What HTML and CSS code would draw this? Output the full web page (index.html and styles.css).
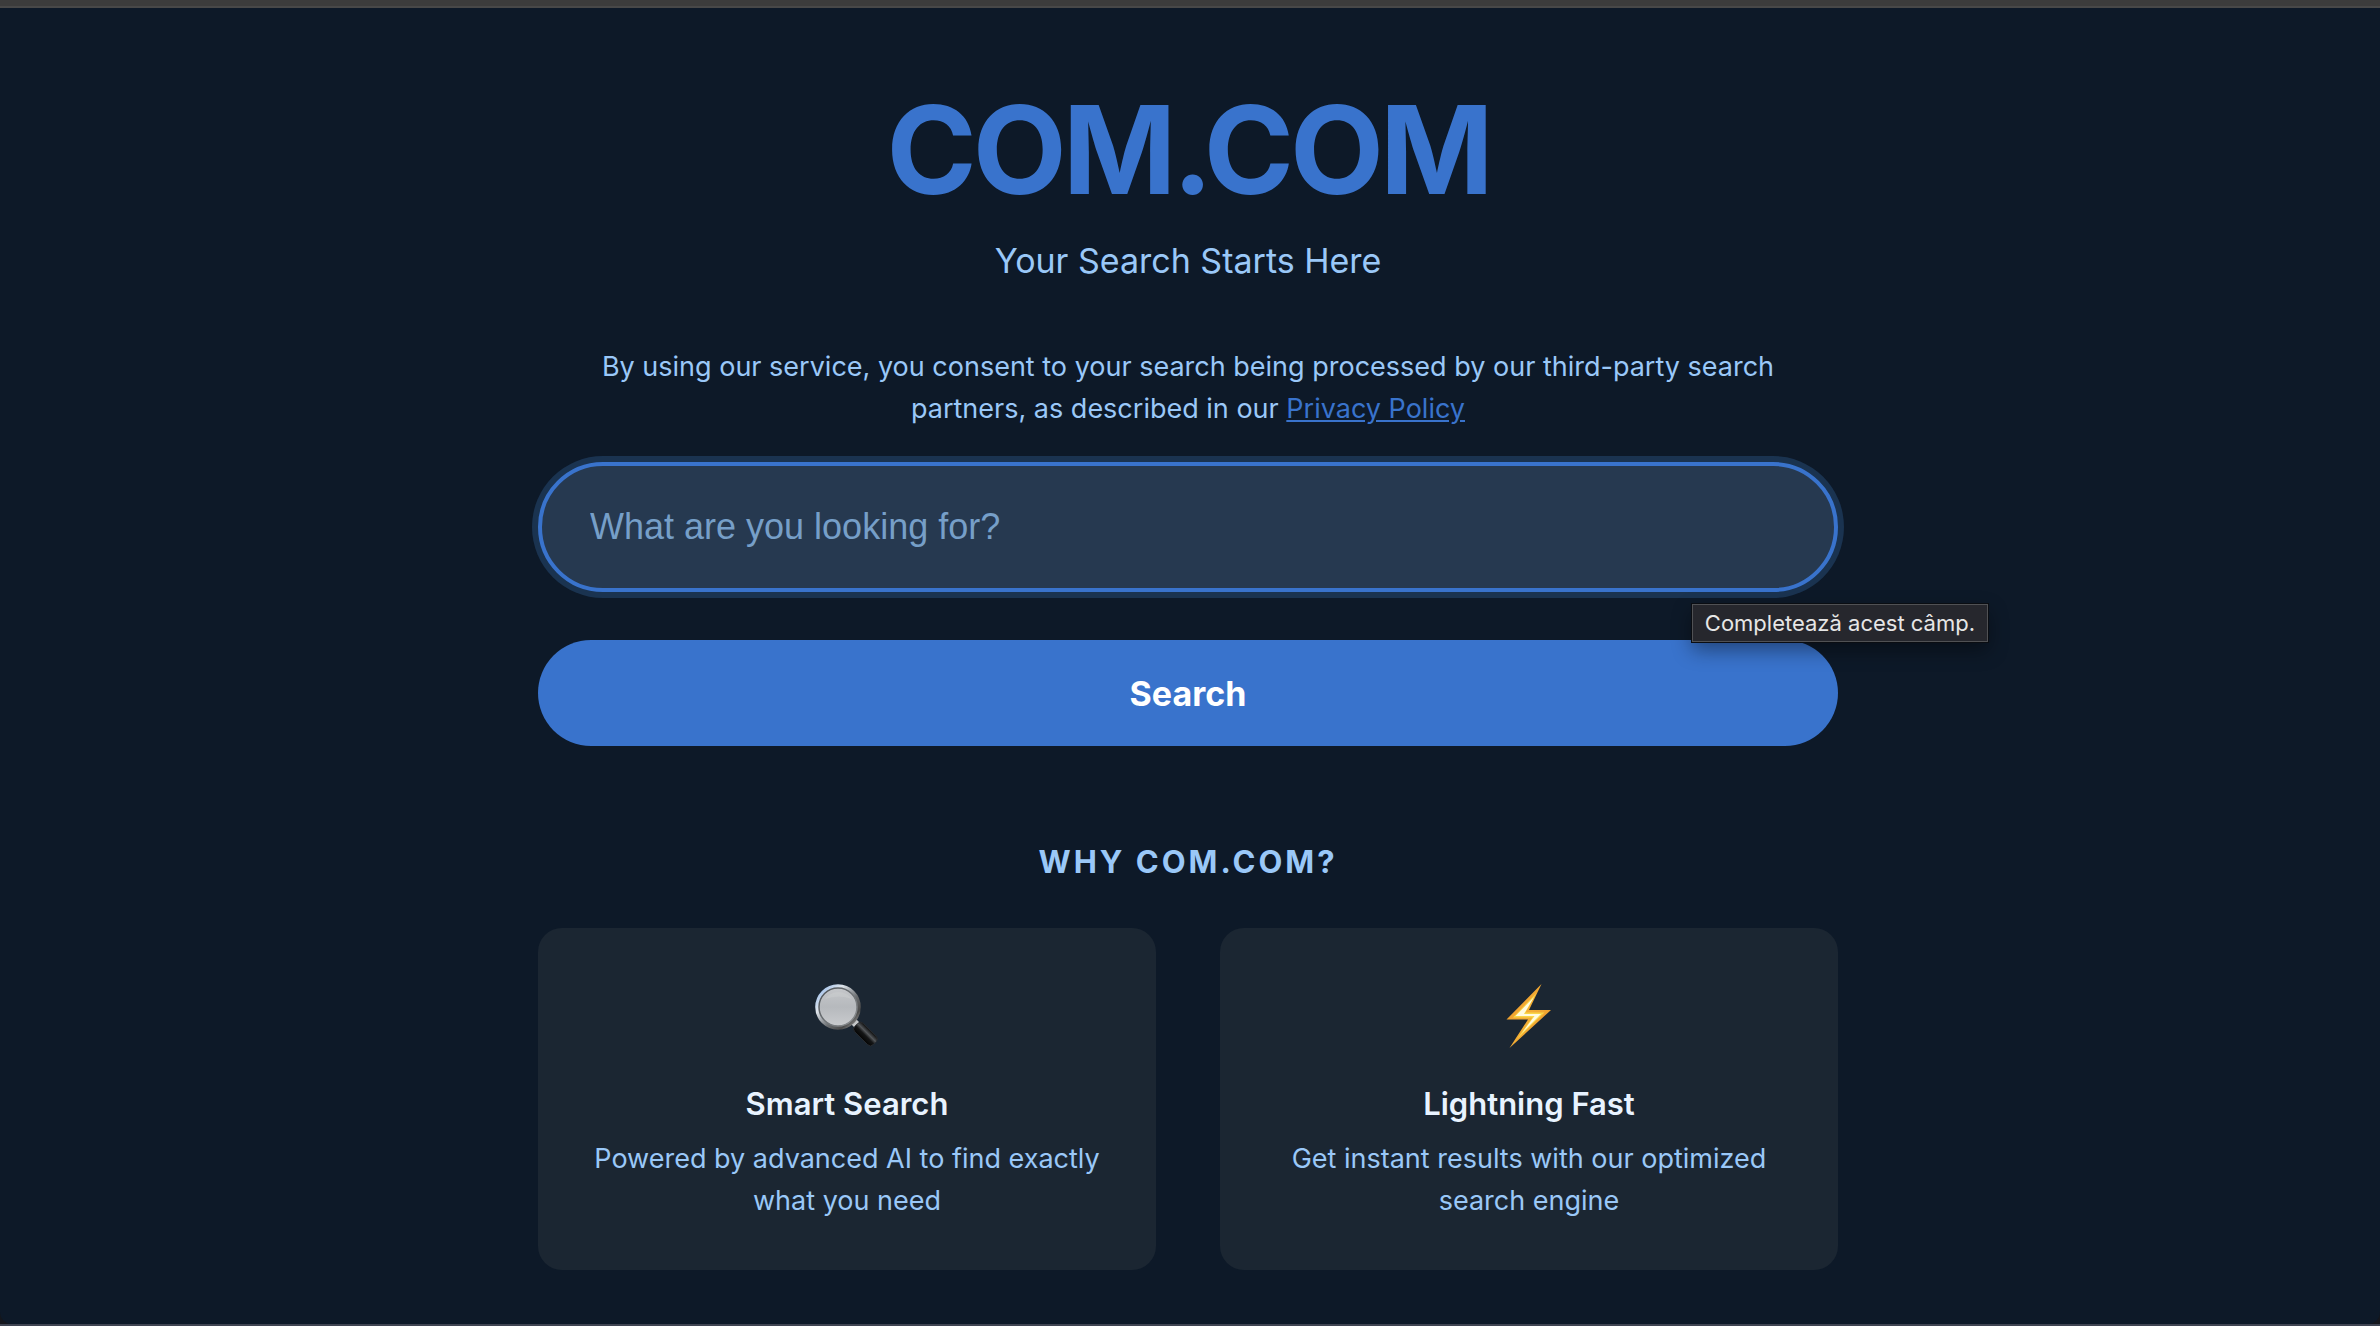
FILE: index.html
```
<!DOCTYPE html>
<html lang="en">
  <head>
    <meta charset="utf-8" />
    <meta name="viewport" content="width=device-width, initial-scale=1" />
    <title>COM.COM</title>
    <link rel="stylesheet" href="styles.css" />
  </head>
  <body>
    <div class="window-top"></div>
    <main class="page">
      <div class="container">
        <header class="header">
          <h1 class="logo">COM.COM</h1>
          <p class="tagline">Your Search Starts Here</p>
        </header>

        <form class="search-form" onsubmit="return false">
          <p class="consent">
            By using our service, you consent to your search being processed by
            our third-party search partners, as described in our
            <a href="#privacy">Privacy Policy</a>
          </p>
          <div class="search-field">
            <input
              class="search-input"
              type="text"
              name="q"
              placeholder="What are you looking for?"
              aria-label="Search"
              aria-describedby="search-hint"
              autocomplete="off"
            />
            <div class="tooltip" id="search-hint" role="tooltip">Completează acest câmp.</div>
          </div>
          <button class="search-button" type="submit">Search</button>
        </form>

        <section class="features">
          <h2 class="features-title">Why COM.COM?</h2>
          <div class="features-grid">
            <div class="card">
              <svg class="card-icon" viewBox="0 0 64 64" aria-hidden="true">
                <defs>
                  <linearGradient id="rim" x1="0" y1="0" x2="1" y2="1">
                    <stop offset="0" stop-color="#8fb6ea" />
                    <stop offset="0.3" stop-color="#dfe5ec" />
                    <stop offset="0.6" stop-color="#6a6d70" />
                    <stop offset="0.8" stop-color="#4a4a4a" />
                    <stop offset="1" stop-color="#b5b5b3" />
                  </linearGradient>
                  <linearGradient id="rim-inner" x1="0" y1="0" x2="1" y2="1">
                    <stop offset="0" stop-color="#4d5257" />
                    <stop offset="1" stop-color="#8d9092" />
                  </linearGradient>
                  <linearGradient id="glass" x1="0" y1="0" x2="0" y2="1">
                    <stop offset="0" stop-color="#c5c7ca" />
                    <stop offset="0.5" stop-color="#b6b9bd" />
                    <stop offset="1" stop-color="#c9cbce" />
                  </linearGradient>
                  <linearGradient id="handle" x1="0" y1="0" x2="0" y2="1">
                    <stop offset="0" stop-color="#0c0d0e" />
                    <stop offset="0.35" stop-color="#54575a" />
                    <stop offset="0.6" stop-color="#141516" />
                    <stop offset="1" stop-color="#050505" />
                  </linearGradient>
                </defs>
                <path d="M36 40l5-5 4 4-5 5z" fill="#c4c6c8" />
                <rect x="-13" y="-6" width="26" height="12" rx="4" transform="translate(50.500 50) rotate(45)" fill="url(#handle)" stroke="#2b2d30" stroke-width="0.8" />
                <circle cx="23" cy="23" r="20.800" fill="none" stroke="url(#rim)" stroke-width="4" />
                <circle cx="23" cy="23" r="19" fill="url(#glass)" stroke="url(#rim-inner)" stroke-width="1.5" />
                <path d="M10 15a16 15 0 0 1 27 0q-13-5-27 0z" fill="#cfd1d3" opacity="0.4" />
              </svg>
              <h3 class="card-title">Smart Search</h3>
              <p class="card-text">Powered by advanced AI to find exactly what you need</p>
            </div>
            <div class="card">
              <svg class="card-icon" viewBox="0 0 64 64" aria-hidden="true">
                <defs>
                  <linearGradient id="bolt" x1="0" y1="0" x2="1" y2="1">
                    <stop offset="0" stop-color="#ee9327" />
                    <stop offset="0.5" stop-color="#f3ae35" />
                    <stop offset="1" stop-color="#ea8f28" />
                  </linearGradient>
                </defs>
                <path d="M44.500 0 9.500 35.500H31L12.500 64 54 26H32z" fill="url(#bolt)" />
                <path d="M39.500 9 16 33.500H35.500L20 55 47.500 28.500H28.500z" fill="#f9d648" />
                <path d="M37 13 18.500 32H37.500L25 49 44 30H27z" fill="#fffbe0" />
              </svg>
              <h3 class="card-title">Lightning Fast</h3>
              <p class="card-text">Get instant results with our optimized search engine</p>
            </div>
          </div>
        </section>
      </div>
    </main>
    <div class="window-bottom"></div>
  </body>
</html>
```

FILE: styles.css
```
* {
  box-sizing: border-box;
  margin: 0;
  padding: 0;
}

body {
  min-height: 100vh;
  display: flex;
  flex-direction: column;
  background: #14161c;
  color: #e8f3ff;
  font-family: Inter, "Noto Sans", sans-serif;
  font-size: 27px;
  line-height: 42px;
}

.window-top {
  height: 8px;
  background: #3c3c3c;
  border-bottom: 2px solid #484848;
}

.window-bottom {
  height: 2px;
  background: #3f4452;
}

.page {
  flex: 1;
  display: flex;
  justify-content: center;
  padding: 64px 36px 48px 32px;
  background: #0d1928;
  border-radius: 0 0 12px 12px;
}

.container {
  width: 100%;
  max-width: 1300px;
}

.header {
  text-align: center;
  margin-bottom: 60px;
}

.logo {
  color: #3973cc;
  font-size: 122px;
  font-weight: 700;
  line-height: 156px;
  letter-spacing: -4px;
}

.tagline {
  margin-top: 8px;
  color: #9ac8f8;
  font-size: 34px;
  line-height: 50px;
}

.consent {
  padding: 0 48px;
  margin-bottom: 32px;
  color: #9ac8f8;
  text-align: center;
}

.consent a {
  color: #3973cc;
}

.search-field {
  position: relative;
  margin-bottom: 48px;
}

.search-input {
  display: block;
  width: 100%;
  height: 130px;
  padding: 0 48px;
  border: 4px solid #3973cc;
  border-radius: 65px;
  outline: none;
  background: #263950;
  box-shadow: 0 0 0 6px #1a3350;
  color: #e8f3ff;
  font-family: "Liberation Sans", Arial, sans-serif;
  font-size: 36px;
}

.search-input::placeholder {
  color: #769fc8;
  opacity: 1;
}

.search-button {
  display: block;
  width: 100%;
  height: 106px;
  border: none;
  border-radius: 53px;
  background: #3973cc;
  color: #fff;
  font-family: inherit;
  font-size: 34px;
  font-weight: 700;
  cursor: pointer;
}

/* native-looking validation hint, hangs off the field's right end */
.tooltip {
  position: absolute;
  top: calc(100% + 12px);
  right: -150px;
  padding: 0 12px;
  border: 1px solid #505154;
  background: #26272d;
  box-shadow: 0 0 0 1px #0a0d12, 0 8px 20px rgba(0, 0, 0, 0.4);
  color: #e6e6e6;
  font-size: 22px;
  line-height: 36px;
  white-space: nowrap;
}

.features {
  margin-top: 92px;
}

.features-title {
  margin-bottom: 42px;
  color: #9ac8f8;
  font-size: 31px;
  font-weight: 700;
  line-height: 48px;
  letter-spacing: 3px;
  text-align: center;
  text-transform: uppercase;
}

.features-grid {
  display: grid;
  grid-template-columns: 1fr 1fr;
  gap: 64px;
}

.card {
  padding: 56px 48px 48px;
  border-radius: 24px;
  background: #1b2632;
  text-align: center;
}

.card-icon {
  display: block;
  width: 64px;
  height: 64px;
  margin: 0 auto 32px;
}

.card-title {
  margin-bottom: 10px;
  font-size: 31px;
  font-weight: 600;
  line-height: 48px;
}

.card-text {
  color: #9ac8f8;
}
```
